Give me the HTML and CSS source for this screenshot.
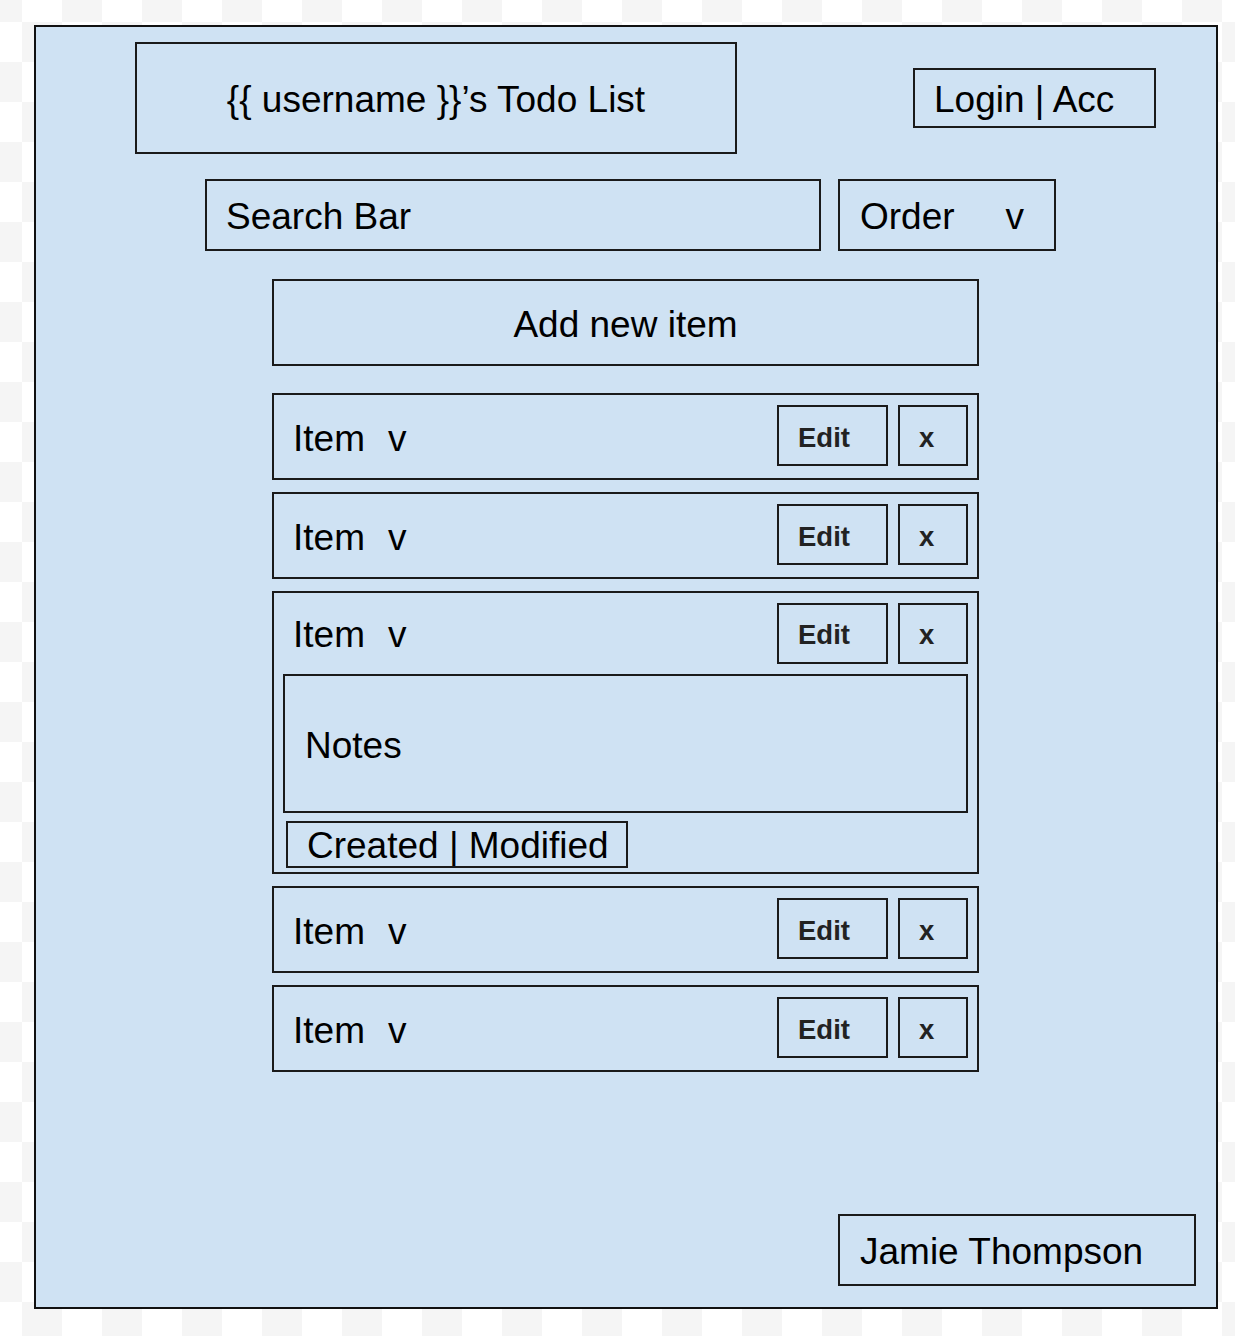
FILE: index.html
```html
<!DOCTYPE html>
<html lang="en">
<head>
<meta charset="utf-8">
<title>Todo List Wireframe</title>
<link rel="stylesheet" href="styles.css">
</head>
<body>
<div class="frame">
  <div class="header">
    <div class="box title">{{ username }}’s Todo List</div>
    <div class="box login">Login | Acc</div>
  </div>
  <div class="toolbar">
    <div class="box search">Search Bar</div>
    <div class="box order">Order<span class="caret">v</span></div>
  </div>
  <div class="box add">Add new item</div>
  <div class="list">
    <div class="box item">
      <div class="item-label">Item<span class="caret-sm">v</span></div>
      <div class="box btn edit">Edit</div>
      <div class="box btn del">x</div>
    </div>
    <div class="box item">
      <div class="item-label">Item<span class="caret-sm">v</span></div>
      <div class="box btn edit">Edit</div>
      <div class="box btn del">x</div>
    </div>
    <div class="box item expanded">
      <div class="item-head">
        <div class="item-label">Item<span class="caret-sm">v</span></div>
        <div class="box btn edit">Edit</div>
        <div class="box btn del">x</div>
      </div>
      <div class="box notes">Notes</div>
      <div class="box meta">Created | Modified</div>
    </div>
    <div class="box item">
      <div class="item-label">Item<span class="caret-sm">v</span></div>
      <div class="box btn edit">Edit</div>
      <div class="box btn del">x</div>
    </div>
    <div class="box item">
      <div class="item-label">Item<span class="caret-sm">v</span></div>
      <div class="box btn edit">Edit</div>
      <div class="box btn del">x</div>
    </div>
  </div>
  <div class="box author">Jamie Thompson</div>
</div>
</body>
</html>
```

FILE: styles.css
```css
* { box-sizing: border-box; }

html, body { height: 100%; }

body {
  margin: 0;
  font-family: "Liberation Sans", Arial, sans-serif;
  color: #000;
  background-color: #fff;
  background-image: conic-gradient(#fff 25%, #f5f5f5 0 50%, #fff 0 75%, #f5f5f5 0);
  background-size: 80px 80px;
  background-position: -18px -18px;
  overflow: hidden;
}

.frame {
  margin: 25px 0 0 34px;
  width: 1184px;
  height: 1284px;
  border: 2px solid #111;
  background: #cfe2f3;
  display: flex;
  flex-direction: column;
  padding-top: 15px;
}

.box {
  border: 2px solid #1a1a1a;
  font-size: 37px;
  line-height: 42px;
}

.header {
  display: flex;
  align-items: center;
  padding-left: 99px;
}

.title {
  width: 602px;
  height: 112px;
  padding-top: 4px;
  display: flex;
  align-items: center;
  justify-content: center;
}

.login {
  margin-left: 176px;
  width: 243px;
  height: 60px;
  padding: 4px 0 0 19px;
  display: flex;
  align-items: center;
}

.toolbar {
  display: flex;
  gap: 17px;
  margin-top: 25px;
  padding-left: 169px;
}

.search {
  width: 616px;
  height: 72px;
  padding: 4px 0 0 19px;
  display: flex;
  align-items: center;
}

.order {
  width: 218px;
  height: 72px;
  padding: 4px 0 0 20px;
  display: flex;
  align-items: center;
}

.caret { margin-left: 51px; }

.add {
  margin: 28px 0 0 236px;
  width: 707px;
  height: 87px;
  padding-top: 4px;
  display: flex;
  align-items: center;
  justify-content: center;
}

.list {
  margin: 27px 0 0 236px;
  width: 707px;
  display: flex;
  flex-direction: column;
  gap: 12px;
}

.item {
  height: 87px;
  padding: 10px 9px 12px 19px;
  display: flex;
  align-items: center;
}

.item-label {
  padding-top: 6px;
}

.caret-sm { margin-left: 23px; }

.btn {
  height: 61px;
  font-size: 27.5px;
  font-weight: bold;
  color: #222;
  padding: 4px 0 0 19px;
  display: flex;
  align-items: center;
}

.edit {
  margin-left: auto;
  width: 111px;
}

.del {
  margin-left: 10px;
  width: 70px;
  padding-left: 19px;
}

.expanded {
  height: 283px;
  padding: 10px 9px 4px 9px;
  flex-direction: column;
  align-items: stretch;
}

.item-head {
  display: flex;
  align-items: center;
  height: 61px;
  padding-left: 10px;
}

.item-head .item-label {
  padding-top: 2px;
}

.item-head .btn {
  padding-top: 2px;
}

.notes {
  margin-top: 10px;
  height: 139px;
  padding: 4px 0 0 20px;
  display: flex;
  align-items: center;
}

.meta {
  margin: 8px 0 0 3px;
  width: 342px;
  height: 47px;
  padding: 3px 0 0 19px;
  display: flex;
  align-items: center;
}

.author {
  margin-top: auto;
  margin-bottom: 21px;
  margin-right: 20px;
  align-self: flex-end;
  width: 358px;
  height: 72px;
  padding: 4px 0 0 20px;
  display: flex;
  align-items: center;
}
```
